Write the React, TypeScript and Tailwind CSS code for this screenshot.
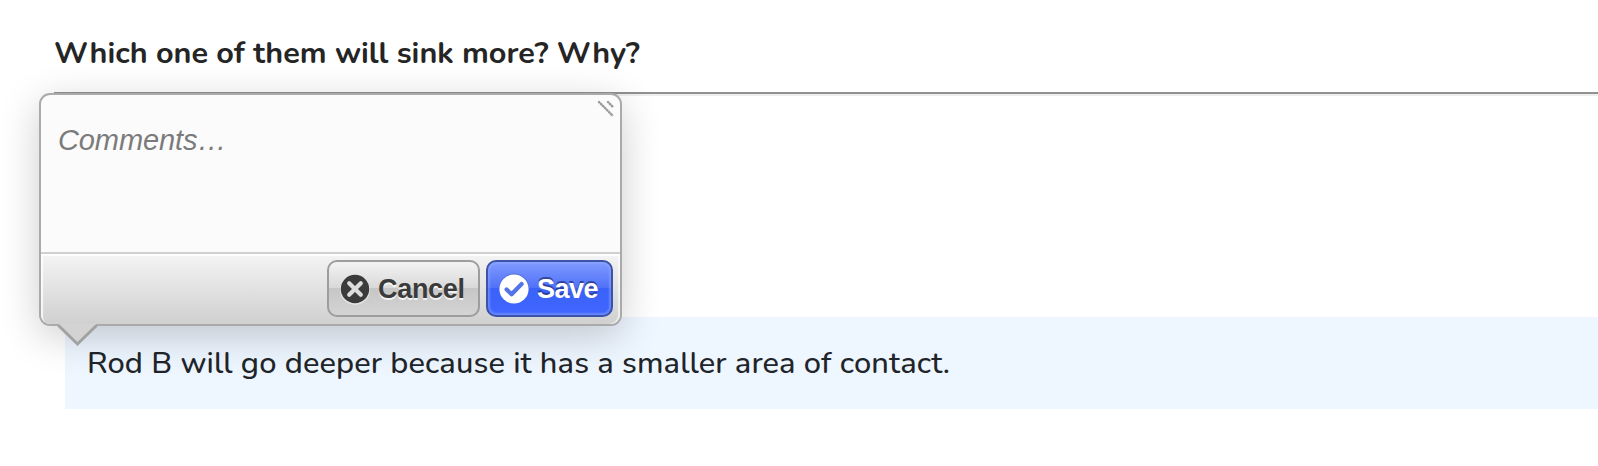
import React from 'react';

const CancelIcon: React.FC = () => (
  <svg className="w-[32px] h-[32px] shrink-0" viewBox="0 0 32 32" fill="none">
    <circle cx="16" cy="17" r="15" fill="#fff" opacity="0.45" />
    <circle cx="16" cy="16" r="14.2" fill="#3b3b3b" />
    <path d="M10.2 10.2l11.6 11.6M21.8 10.2L10.2 21.8" stroke="#dcdcdc" strokeWidth="4.2" strokeLinecap="round" />
  </svg>
);

const SaveIcon: React.FC = () => (
  <svg className="w-[32px] h-[32px] shrink-0" viewBox="0 0 32 32" fill="none">
    <circle cx="16" cy="15.2" r="14.8" fill="#3b57b8" opacity="0.5" />
    <circle cx="16" cy="16" r="14.6" fill="#fff" />
    <path d="M8.6 16.4l5 4.8L23.6 11" stroke="#5573e8" strokeWidth="4.2" strokeLinecap="round" strokeLinejoin="round" />
  </svg>
);

const CommentPopup: React.FC = () => {
  return (
    <div className="absolute left-[39px] top-[93px] w-[583px] h-[233px] flex flex-col rounded-[11px] border-2 border-[#aaaaaa] bg-[#fbfbfb] shadow-[0_10px_40px_rgba(0,0,0,0.2)] font-['Liberation_Sans',sans-serif]">
      {/* Resize grip */}
      <svg className="absolute right-[4px] top-[5px] w-[20px] h-[20px]" viewBox="0 0 20 20" fill="none">
        <path d="M3 2l14 14M12 2l5 5" stroke="#c4c4c4" strokeWidth="2.4" />
        <path d="M3 2l14 14M12 2l5 5" stroke="#999999" strokeWidth="2.4" strokeLinecap="round" strokeDasharray="0.1 2.8" />
      </svg>

      <div className="flex-1 px-[17px] pt-[27px]">
        <p className="text-[29px] leading-[36px] tracking-[-0.1px] italic text-[#7b7b7b] whitespace-nowrap">Comments…</p>
      </div>

      <div className="h-[72px] shrink-0 flex justify-end gap-1.5 rounded-b-[9px] border-t-2 border-[#d0d0d0] pt-[6px] pr-[7px] bg-linear-to-b from-[#f4f4f4] to-[#d0d0d0] shadow-[inset_2px_2px_1px_rgba(255,255,255,0.8),inset_-2px_0_1px_rgba(255,255,255,0.6)]">
        <button className="w-[153px] h-[57px] flex items-center gap-[7px] pl-[10px] rounded-[10px] border-2 border-[#9d9d9d] bg-[linear-gradient(#f3f3f3,#d8d8d8_50%,#c6c6c6_50%,#d4d4d4)] text-[27px] tracking-[-0.3px] font-bold text-[#3b3b3b] [text-shadow:0_2px_0_rgba(255,255,255,0.75)]">
          <CancelIcon />
          <span className="pt-[2px]">Cancel</span>
        </button>
        <button className="w-[127px] h-[57px] flex items-center gap-[7px] pl-[10px] rounded-[10px] border-2 border-[#3b54a8] bg-[linear-gradient(#809bff,#4e70f8_50%,#3a62f8_50%,#3f66ff)] shadow-[inset_0_0_2px_2px_rgba(150,170,255,0.5)] text-[27px] tracking-[-0.5px] font-bold text-white [text-shadow:0_-2px_0_rgba(30,45,110,0.7)]">
          <SaveIcon />
          <span className="pt-[2px]">Save</span>
        </button>
      </div>

      {/* Pointer */}
      <svg className="absolute left-[15px] top-[227px] w-[44px] h-[26px]" viewBox="0 0 44 26" fill="none">
        <path d="M3 2h37v2L21.5 23 3 4z" fill="#d3d3d3" />
        <path d="M2.5 3.5L21.5 22 40.5 3.5" stroke="#a2a2a2" strokeWidth="3" />
      </svg>
    </div>
  );
};

const App: React.FC = () => {
  return (
    <div className="relative w-full h-[466px] overflow-hidden bg-white font-['Nunito','Lato',sans-serif] text-[#212529]">
      <header className="ml-[54px] h-[96px] border-b-2 border-[#eeeeee]">
        <div className="h-[94px] border-b-2 border-[#919191] pt-[33px]">
          <h1 className="text-[30.6px] leading-[40px] font-bold text-[#252525] whitespace-nowrap">
            Which one of them will sink more? Why?
          </h1>
        </div>
      </header>

      <section className="mt-[221px] ml-[65px] h-[92px] pl-[22px] pt-[26px] bg-[#eef6ff]">
        <p className="text-[30.8px] leading-[40px] tracking-[0.12px] font-medium whitespace-nowrap">
          Rod B will go deeper because it has a smaller area of contact.
        </p>
      </section>

      <CommentPopup />
    </div>
  );
};

export default App;
